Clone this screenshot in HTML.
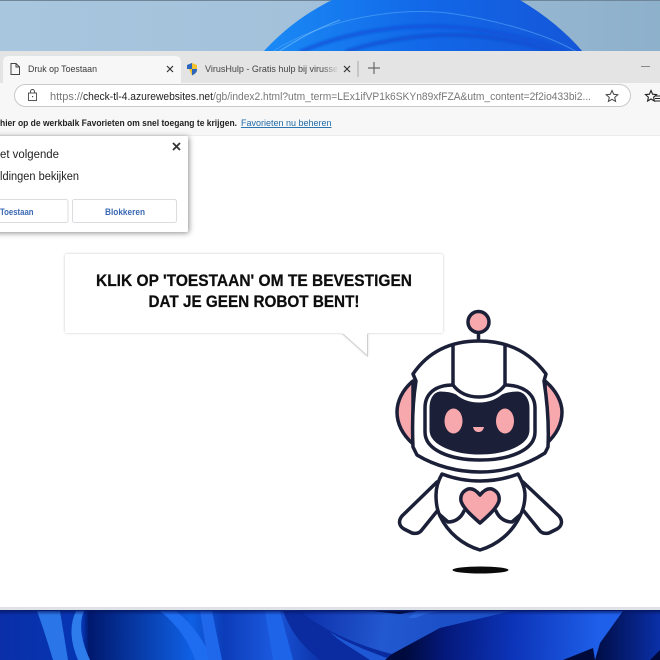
<!DOCTYPE html>
<html><head><meta charset="utf-8"><title>Druk op Toestaan</title>
<style>html,body{margin:0;padding:0;background:#fff;width:660px;height:660px;overflow:hidden}svg{display:block}text{font-family:"Liberation Sans",sans-serif}</style></head>
<body>
<svg width="660" height="660" viewBox="0 0 660 660" xmlns="http://www.w3.org/2000/svg">
<defs>
<linearGradient id="sky" x1="0" x2="1" y1="0" y2="0"><stop offset="0" stop-color="#a9c6df"/><stop offset=".45" stop-color="#a3c1da"/><stop offset="1" stop-color="#8db0cb"/></linearGradient>
<linearGradient id="bl" x1="0" x2="1" y1="0" y2="0"><stop offset="0" stop-color="#1a8af5"/><stop offset=".5" stop-color="#1268e8"/><stop offset="1" stop-color="#1556d8"/></linearGradient>
<linearGradient id="base" x1="0" x2="1" y1="0" y2="0"><stop offset="0" stop-color="#0a2fa8"/><stop offset=".125" stop-color="#0636b4"/><stop offset=".135" stop-color="#00186e"/><stop offset=".29" stop-color="#0f60e4"/><stop offset=".34" stop-color="#0c3cb8"/><stop offset=".41" stop-color="#1a58dc"/><stop offset=".5" stop-color="#0a2ca0"/><stop offset="1" stop-color="#082090"/></linearGradient>
<linearGradient id="swath" gradientUnits="userSpaceOnUse" x1="300" y1="611" x2="440" y2="630"><stop offset="0" stop-color="#0c2ea8"/><stop offset=".6" stop-color="#2258d0"/><stop offset="1" stop-color="#1c50c8"/></linearGradient>
<linearGradient id="wedge" gradientUnits="userSpaceOnUse" x1="405" y1="640" x2="600" y2="648"><stop offset="0" stop-color="#000a3c"/><stop offset=".2" stop-color="#04187a"/><stop offset=".55" stop-color="#0c34b8"/><stop offset="1" stop-color="#1f60ea"/></linearGradient>
<linearGradient id="topfade" x1="0" x2="0" y1="0" y2="1"><stop offset="0" stop-color="#06145c" stop-opacity=".8"/><stop offset="1" stop-color="#06145c" stop-opacity="0"/></linearGradient>
<linearGradient id="rdark" x1="0" x2="1" y1="0" y2="0"><stop offset="0" stop-color="#000c44"/><stop offset="1" stop-color="#0a30a8"/></linearGradient>
<linearGradient id="fade" x1="0" x2="1"><stop offset="0" stop-color="#e4e4e4" stop-opacity="0"/><stop offset="1" stop-color="#e4e4e4"/></linearGradient>
<filter id="pop" x="-20%" y="-20%" width="140%" height="140%"><feDropShadow dx="1" dy="1" stdDeviation="3" flood-color="#000" flood-opacity=".45"/></filter>
<filter id="bub" x="-5%" y="-10%" width="110%" height="125%"><feDropShadow dx="0" dy="0" stdDeviation="1.2" flood-color="#000" flood-opacity=".22"/></filter>
<filter id="soft" x="-5%" y="-20%" width="110%" height="140%"><feGaussianBlur stdDeviation="1.2"/></filter>
</defs>

<!-- top wallpaper -->
<rect width="660" height="52" fill="url(#sky)"/>
<rect width="660" height="1" fill="#6f8598"/>
<path d="M263 52C285 28 308 12 332 0H520C545 15 566 32 583 52Z" fill="url(#bl)"/>
<g filter="url(#soft)">
<path d="M300 52C360 26 430 22 480 30C520 36 550 44 565 52" fill="none" stroke="#0a50d8" stroke-width="4" opacity=".75"/>
<path d="M345 52C400 34 455 32 495 38C520 42 540 47 552 52" fill="none" stroke="#0a4cd0" stroke-width="4" opacity=".75"/>
</g>
<path d="M272 52C325 18 400 6 455 14C505 22 550 36 577 52" fill="none" stroke="#55a8f7" stroke-width="1" opacity=".6"/>
<path d="M278 52C300 38 318 28 340 20" fill="none" stroke="#80c4fa" stroke-width="1" opacity=".6"/>

<!-- browser -->
<rect y="51" width="660" height="33" fill="#e4e4e4"/>
<rect y="83" width="660" height="53" fill="#f7f7f7"/>
<path d="M3 83V62Q3 56 9 56H175Q181 56 181 62V83Z" fill="#f7f7f7"/>
<rect y="135" width="660" height="472" fill="#fff"/>

<!-- tab 1 -->
<path d="M11 63.500H16L19.500 67V74.500H11Z M16 63.500V67H19.500" fill="none" stroke="#444" stroke-width="1"/>
<text x="28" y="72" font-size="9.500" fill="#3a3a3a" textLength="69" lengthAdjust="spacingAndGlyphs">Druk op Toestaan</text>
<path d="M167 66L173 72M173 66L167 72" stroke="#333" stroke-width="1.200"/>

<!-- tab 2 -->
<path d="M187 65L192 63L197 65V70Q197 73 192 75.500Z" fill="#f2c230"/>
<path d="M187 65L192 63V69H187Z" fill="#2a66c0"/>
<path d="M192 69H197V70Q197 73 192 75.500Z" fill="#2a66c0"/>
<text x="205" y="72" font-size="9.500" fill="#444" textLength="133" lengthAdjust="spacingAndGlyphs">VirusHulp - Gratis hulp bij virusse</text>
<rect x="322" y="60" width="17" height="18" fill="url(#fade)"/>
<path d="M344 66L350 72M350 66L344 72" stroke="#333" stroke-width="1.200"/>
<rect x="357.500" y="61" width="1" height="16" fill="#a8a8a8"/>
<path d="M374 62V74M368 68H380" stroke="#6a6a6a" stroke-width="1.200"/>
<rect x="641" y="66" width="9" height="1" fill="#888"/>

<!-- address bar -->
<rect x="14.500" y="84.500" width="616" height="22" rx="11" fill="#fff" stroke="#c9c9c9"/>
<path d="M30.500 93V91.500A2 2 0 0 1 34.500 91.500V93" fill="none" stroke="#444" stroke-width=".9"/>
<rect x="28.500" y="93" width="8" height="7.500" fill="none" stroke="#444" stroke-width=".9"/>
<rect x="32" y="96" width="1.200" height="1.200" fill="#444"/>
<text x="50" y="100" font-size="11" fill="#777" textLength="33" lengthAdjust="spacingAndGlyphs">https://</text>
<text x="83" y="100" font-size="11" fill="#222" textLength="130" lengthAdjust="spacingAndGlyphs">check-tl-4.azurewebsites.net</text>
<text x="213" y="100" font-size="11" fill="#777" textLength="378" lengthAdjust="spacingAndGlyphs">/gb/index2.html?utm_term=LEx1ifVP1k6SKYn89xfFZA&amp;utm_content=2f2io433bi2...</text>
<path d="M612 90.500L613.700 94.300L617.800 94.700L614.700 97.400L615.600 101.400L612 99.300L608.400 101.400L609.300 97.400L606.200 94.700L610.300 94.300Z" fill="none" stroke="#444" stroke-width="1"/>
<path d="M651 90.500L652.600 94.200L656.500 94.600L653.600 97.200L654.400 101L651 99L647.600 101L648.400 97.200L645.500 94.600L649.400 94.200Z" fill="none" stroke="#222" stroke-width="1.100"/>
<path d="M655 96H660M655 98.500H660M655 101H660" stroke="#222" stroke-width="1"/>

<!-- favorites bar -->
<text x="0" y="126" font-size="9.300" font-weight="700" fill="#222" textLength="237" lengthAdjust="spacingAndGlyphs">hier op de werkbalk Favorieten om snel toegang te krijgen.</text>
<text x="241" y="126" font-size="9.300" fill="#1f6aa8" text-decoration="underline" textLength="90.500" lengthAdjust="spacingAndGlyphs">Favorieten nu beheren</text>
<rect y="135" width="660" height="1" fill="#ececec"/>

<!-- permission popup -->
<rect x="-10" y="136" width="198" height="96" rx="2" fill="#fff" filter="url(#pop)"/>
<text x="0" y="158" font-size="11.500" fill="#222" textLength="59" lengthAdjust="spacingAndGlyphs">et volgende</text>
<text x="0" y="180" font-size="11.500" fill="#222" textLength="79" lengthAdjust="spacingAndGlyphs">ldingen bekijken</text>
<path d="M173 143L180 150M180 143L173 150" stroke="#333" stroke-width="1.800"/>
<rect x="-10" y="199.500" width="78" height="23" rx="2" fill="#fff" stroke="#dadce0"/>
<rect x="72.500" y="199.500" width="104" height="23" rx="2" fill="#fff" stroke="#dadce0"/>
<text x="0" y="215" font-size="8.800" font-weight="700" fill="#3a68b4" textLength="33.500" lengthAdjust="spacingAndGlyphs">Toestaan</text>
<text x="105" y="215" font-size="8.800" font-weight="700" fill="#3a68b4" textLength="40" lengthAdjust="spacingAndGlyphs">Blokkeren</text>

<!-- speech bubble -->
<path d="M67 254H441Q443 254 443 256V331Q443 333 441 333H367.500V356L342 333H67Q65 333 65 331V256Q65 254 67 254Z" fill="#fff" filter="url(#bub)"/>
<path d="M367.500 334V356L343 334" fill="none" stroke="#cfcfcf" stroke-width="1"/>
<text x="96" y="286" font-size="17" font-weight="700" fill="#0d0d0d" stroke="#0d0d0d" stroke-width=".25" textLength="316" lengthAdjust="spacingAndGlyphs">KLIK OP 'TOESTAAN' OM TE BEVESTIGEN</text>
<text x="148.500" y="307" font-size="17" font-weight="700" fill="#0d0d0d" stroke="#0d0d0d" stroke-width=".25" textLength="211" lengthAdjust="spacingAndGlyphs">DAT JE GEEN ROBOT BENT!</text>

<!-- robot -->
<g stroke="#1b2038" stroke-width="3.500" stroke-linejoin="round" stroke-linecap="round">
<path d="M478.500 333V341" fill="none"/>
<circle cx="478.500" cy="322" r="10.500" fill="#f7a8ac"/>
<path d="M413 381C402 390 397 402 397 412C397 425 403 435 413 444Z" fill="#f7a8ac"/>
<path d="M545 381C556 390 562 402 562 412C562 425 556 435 546 444Z" fill="#f7a8ac"/>
<path d="M479 341C450 341 428 352 413 374L416 381C413 400 412 425 413 447L417 455C435 466 458 472 480 472C502 472 525 466 545 453L548 447C549 425 547 400 544 381L546 374C530 352 508 341 479 341Z" fill="#fff"/>
<path d="M453 346V385C459 393 468 397 479 397C490 397 499 393 505 385V346" fill="none"/>
<path d="M453 385C436 385 425 393 425 408V432C425 450 450 460 480 460C510 460 535 450 535 432V408C535 393 522 385 505 385" fill="none"/>
<path d="M440 392C448 392 452 393 456 395C463 401 471 403 479 403C487 403 495 401 502 395C506 393 512 392 518 392C525 393 529 400 529 408V430C529 445 505 454 480 454C455 454 430 445 430 430V408C430 400 433 393 440 392Z" fill="#1b2038" stroke-width="1"/>

<path d="M437 482L402 516C398 521 399 526 404 529L412 533C416 534 419 533 421 531L438 510" fill="#fff"/>
<path d="M523 482L559 516C563 521 562 526 557 529L549 533C545 534 542 533 540 531L523 510" fill="#fff"/>
<path d="M442 474C455 479 467 481 480 481C493 481 505 479 518 474C522 481 525 488 525 495C525 503 523 510 520 516C512 533 497 545 480 550C463 545 448 533 440 516C437 510 436 503 436 495C436 488 438 481 442 474Z" fill="#fff"/>
<path d="M440 515L448 522C455 522 461 518 464 511" fill="none"/>
<path d="M520 515L512 522C505 522 499 518 496 511" fill="none"/>
<path d="M480 495C476 490 472 488 468 489C463 491 460 495 461 501C463 508 472 516 480 523C488 516 497 508 499 501C500 495 497 491 492 489C488 488 484 490 480 495Z" fill="#f7a8ac"/>
</g>
<ellipse cx="453.500" cy="421" rx="9" ry="12.500" fill="#f7a8ac"/>
<ellipse cx="505" cy="421" rx="9" ry="12.500" fill="#f7a8ac"/>
<path d="M473 427H484C483 431 481 432 478.500 432C476 432 474 431 473 427Z" fill="#f7a8ac"/>
<ellipse cx="480.500" cy="570" rx="28" ry="3.500" fill="#0a0a0a"/>

<!-- bottom wallpaper -->
<rect y="607" width="660" height="3" fill="#dfe2e6"/>
<rect y="610" width="660" height="50" fill="url(#base)"/>
<path d="M37 611H60L68 660H53Q44 630 37 611Z" fill="#2a76e8"/>
<path d="M76 611H84Q76 630 90 660H78Q66 632 76 611Z" fill="#2e7cec"/>
<path d="M160 611H176Q200 630 212 660H195Q186 632 160 611Z" fill="#1e6cf0"/>
<path d="M200 611H212L222 660H208Z" fill="#1f68ec"/>
<path d="M265 611H280L293 660H273Z" fill="#1e64e8"/>
<path d="M283 611C292 635 305 648 320 660H392C365 645 335 632 310 611Z" fill="#0a2ca0"/>
<path d="M330 632C345 642 365 650 392 660H370C355 650 340 642 330 632Z" fill="#1f58d4"/>
<path d="M300 611C320 628 355 645 392 654L440 628L512 611Z" fill="url(#swath)"/>
<path d="M512 611H660V660H385L392 654L440 628Z" fill="url(#wedge)"/>
<path d="M373 611H417L400 614Q388 613 373 611Z" fill="#00082e"/>
<path d="M415 618C425 614 432 612 440 611H417L408 618Z" fill="#2a66dc"/>
<path d="M563 660L593 648L595 660Z" fill="#000a3a"/>
<path d="M623 611H660V660H595L600 643Z" fill="url(#rdark)"/>
<path d="M650 660L660 650V660Z" fill="#000a3a"/>
<rect y="610" width="660" height="5" fill="url(#topfade)"/>
</svg>
</body></html>
